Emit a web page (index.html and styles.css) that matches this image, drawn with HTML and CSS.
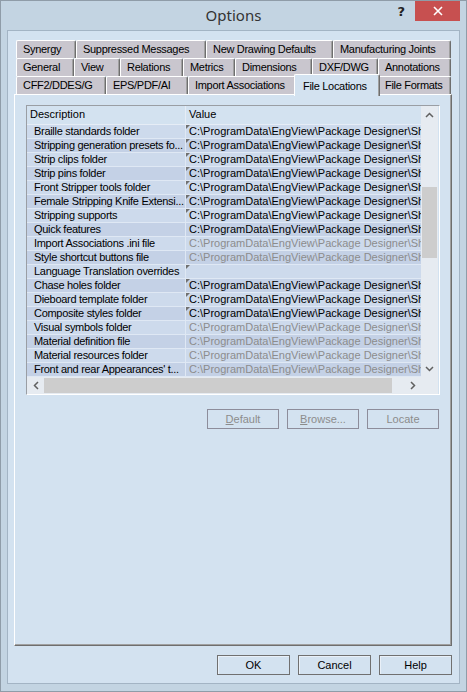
FILE: index.html
```html
<!DOCTYPE html>
<html lang="en">
<head>
  <meta charset="UTF-8" />
  <title>Options</title>
  <link rel="stylesheet" href="styles.css">
</head>
<body>
  <div class="window">
    <div class="titlebar">
      <span></span>
      <span class="title">Options</span>
      <div class="controls">
        <span class="help">?</span>
        <span class="close">
          <svg width="10" height="10" viewBox="0 0 10 10"><path d="M1 1L9 9M9 1L1 9" stroke="#fff" stroke-width="1.6"/></svg>
        </span>
      </div>
    </div>

    <div class="client">
      <div class="tabs">
        <div class="tab-row row-a">
          <span class="tab">Synergy</span>
          <span class="tab">Suppressed Messages</span>
          <span class="tab">New Drawing Defaults</span>
          <span class="tab">Manufacturing Joints</span>
        </div>
        <div class="tab-row row-b">
          <span class="tab">General</span>
          <span class="tab">View</span>
          <span class="tab">Relations</span>
          <span class="tab">Metrics</span>
          <span class="tab">Dimensions</span>
          <span class="tab">DXF/DWG</span>
          <span class="tab">Annotations</span>
        </div>
        <div class="tab-row row-c">
          <span class="tab">CFF2/DDES/G</span>
          <span class="tab">EPS/PDF/AI</span>
          <span class="tab">Import Associations</span>
          <span class="tab active">File Locations</span>
          <span class="tab">File Formats</span>
        </div>
      </div>

      <div class="panel">
        <div class="list">
          <div class="list-main">
            <div class="list-head">
              <span class="col-desc">Description</span>
              <span class="col-val">Value</span>
            </div>
            <div class="row"><span class="col-desc">Braille standards folder</span><span class="col-val mark">C:\ProgramData\EngView\Package Designer\Shared\Braille</span></div>
            <div class="row alt"><span class="col-desc">Stripping generation presets fo...</span><span class="col-val mark">C:\ProgramData\EngView\Package Designer\Shared\Stripping</span></div>
            <div class="row"><span class="col-desc">Strip clips folder</span><span class="col-val mark">C:\ProgramData\EngView\Package Designer\Shared\Clips</span></div>
            <div class="row alt"><span class="col-desc">Strip pins folder</span><span class="col-val mark">C:\ProgramData\EngView\Package Designer\Shared\Pins</span></div>
            <div class="row"><span class="col-desc">Front Stripper tools folder</span><span class="col-val mark">C:\ProgramData\EngView\Package Designer\Shared\Tools</span></div>
            <div class="row alt"><span class="col-desc">Female Stripping Knife Extensi...</span><span class="col-val mark">C:\ProgramData\EngView\Package Designer\Shared\Knives</span></div>
            <div class="row"><span class="col-desc">Stripping supports</span><span class="col-val mark">C:\ProgramData\EngView\Package Designer\Shared\Supports</span></div>
            <div class="row alt"><span class="col-desc">Quick features</span><span class="col-val">C:\ProgramData\EngView\Package Designer\Shared\Features</span></div>
            <div class="row"><span class="col-desc">Import Associations .ini file</span><span class="col-val dim">C:\ProgramData\EngView\Package Designer\Shared\Import.ini</span></div>
            <div class="row alt"><span class="col-desc">Style shortcut buttons file</span><span class="col-val dim">C:\ProgramData\EngView\Package Designer\Shared\Styles.ini</span></div>
            <div class="row"><span class="col-desc">Language Translation overrides</span><span class="col-val mark"></span></div>
            <div class="row alt"><span class="col-desc">Chase holes folder</span><span class="col-val mark">C:\ProgramData\EngView\Package Designer\Shared\Holes</span></div>
            <div class="row"><span class="col-desc">Dieboard template folder</span><span class="col-val mark">C:\ProgramData\EngView\Package Designer\Shared\Dieboard</span></div>
            <div class="row alt"><span class="col-desc">Composite styles folder</span><span class="col-val mark">C:\ProgramData\EngView\Package Designer\Shared\Composite</span></div>
            <div class="row"><span class="col-desc">Visual symbols folder</span><span class="col-val dim">C:\ProgramData\EngView\Package Designer\Shared\Symbols</span></div>
            <div class="row alt"><span class="col-desc">Material definition file</span><span class="col-val dim">C:\ProgramData\EngView\Package Designer\Shared\Materials.xml</span></div>
            <div class="row"><span class="col-desc">Material resources folder</span><span class="col-val dim">C:\ProgramData\EngView\Package Designer\Shared\Materials</span></div>
            <div class="row alt"><span class="col-desc">Front and rear Appearances' t...</span><span class="col-val dim">C:\ProgramData\EngView\Package Designer\Shared\Appearances</span></div>
          </div>

          <div class="vscroll">
            <span class="arrow"><svg width="9" height="6" viewBox="0 0 9 6"><path d="M1 5L4.5 1.5L8 5" fill="none" stroke="#606060" stroke-width="1.5"/></svg></span>
            <div class="vtrack"><span class="vthumb"></span></div>
            <span class="arrow"><svg width="9" height="6" viewBox="0 0 9 6"><path d="M1 1L4.5 4.5L8 1" fill="none" stroke="#606060" stroke-width="1.5"/></svg></span>
          </div>

          <div class="hscroll">
            <span class="arrow"><svg width="6" height="9" viewBox="0 0 6 9"><path d="M5 1L1.5 4.5L5 8" fill="none" stroke="#606060" stroke-width="1.5"/></svg></span>
            <div class="htrack"><span class="hthumb"></span></div>
            <span class="arrow"><svg width="6" height="9" viewBox="0 0 6 9"><path d="M1 1L4.5 4.5L1 8" fill="none" stroke="#606060" stroke-width="1.5"/></svg></span>
          </div>
          <div class="corner"></div>
        </div>

        <div class="panel-buttons">
          <button class="btn" disabled><u>D</u>efault</button>
          <button class="btn" disabled><u>B</u>rowse...</button>
          <button class="btn" disabled>Locate</button>
        </div>
      </div>

      <div class="dialog-buttons">
        <button class="btn">OK</button>
        <button class="btn">Cancel</button>
        <button class="btn">Help</button>
      </div>
    </div>
  </div>
</body>
</html>
```

FILE: styles.css
```css
:root {
  --frame: #c3d4e2;
  --face: #d3e2f0;
  --tab: #c9c6ce;
  --row: #cddaec;
  --row-alt: #c4d1e6;
  --grid-line: #dfe8f4;
  --shadow: #6e6e6e;
  --dim-text: #8c8c8c;
}

body {
  margin: 0;
  font-family: "Liberation Sans", Arial, sans-serif;
  font-size: 11px;
  color: #000;
}

.window {
  width: 467px;
  height: 692px;
  box-sizing: border-box;
  background: var(--frame);
  border: 1px solid #8f9ca8;
  display: flex;
  flex-direction: column;
}

/* title bar */
.titlebar {
  height: 29px;
  display: grid;
  grid-template-columns: 1fr auto 1fr;
}

.title {
  font-family: "Noto Sans", "Open Sans", sans-serif;
  font-size: 15px;
  line-height: 29px;
  color: #333;
}

.controls {
  justify-self: end;
  display: flex;
  align-items: flex-start;
  gap: 10px;
  margin-right: 6px;
}

.help {
  font-family: "DejaVu Sans", sans-serif;
  font-weight: bold;
  font-size: 13px;
  line-height: 22px;
  color: #222;
}

.close {
  width: 45px;
  height: 20px;
  background: #c75050;
  display: flex;
  align-items: center;
  justify-content: center;
}

/* client area */
.client {
  flex: 1;
  margin: 0 6px 7px;
  background: var(--face);
  border: 1px solid #a3b4c4;
  display: flex;
  flex-direction: column;
  padding: 9px 7px 8px 6px;
}

.tabs {
  margin-left: 2px;
}

.tab-row {
  display: grid;
  height: 18px;
}

.row-a { grid-template-columns: 60px 130px 127px 118px; }
.row-b { grid-template-columns: 58px 46px 63px 52px 77px 66px 73px; }
.row-c { grid-template-columns: 90px 82px 108px 82px 73px; }

.tab {
  box-sizing: border-box;
  height: 18px;
  padding: 2px 0 0 6px;
  letter-spacing: -0.3px;
  background: var(--tab);
  border-left: 1px solid #fff;
  border-top: 1px solid #fff;
  border-right: 1px solid var(--shadow);
  box-shadow: inset -1px 0 #a0a0a0;
  border-radius: 2px 2px 0 0;
  white-space: nowrap;
  overflow: hidden;
}

.tab.active {
  background: var(--face);
  height: 22px;
  margin: -2px -2px 0 -2px;
  padding: 5px 0 0 8px;
  position: relative;
  z-index: 1;
}

.panel {
  height: 552px;
  box-sizing: border-box;
  border-left: 1px solid #fff;
  border-top: 1px solid #fff;
  border-right: 1px solid var(--shadow);
  border-bottom: 1px solid var(--shadow);
  box-shadow: inset -1px -1px #a0a0a0;
  padding: 10px 0 0 11px;
}

/* list */
.list {
  width: 414px;
  box-sizing: border-box;
  border: 1px solid #9a9ea4;
  border-right-color: #fff;
  border-bottom-color: #fff;
  display: grid;
  grid-template-columns: 394px 17px;
  grid-template-rows: 271px 17px;
  background: var(--face);
}

.list-main {
  overflow: hidden;
}

.list-head,
.row {
  display: grid;
  grid-template-columns: 159px 235px;
  white-space: nowrap;
}

.list-head {
  height: 19px;
  line-height: 17px;
  box-sizing: border-box;
  border-bottom: 1px solid #e6edf6;
}

.list-head span {
  padding-left: 3px;
}

.list-head .col-desc {
  border-right: 1px solid #e6edf6;
}

.row {
  height: 14px;
  line-height: 13px;
  box-sizing: border-box;
  border-bottom: 1px solid var(--grid-line);
}

.row span {
  background: var(--row);
  overflow: hidden;
}

.row.alt span {
  background: var(--row-alt);
}

.row .col-desc {
  padding-left: 7px;
  letter-spacing: -0.3px;
  border-right: 1px solid var(--grid-line);
}

.row .col-val {
  padding-left: 3px;
  position: relative;
}

.col-val.mark::before {
  content: "";
  position: absolute;
  left: 0;
  top: 0;
  border-top: 4px solid #707070;
  border-right: 4px solid transparent;
}

.col-val.dim {
  color: var(--dim-text);
}

/* scrollbars */
.vscroll {
  display: flex;
  flex-direction: column;
  background: #e6ebf1;
}

.vscroll .arrow {
  height: 17px;
  display: flex;
  align-items: center;
  justify-content: center;
}

.vtrack {
  flex: 1;
  padding-top: 64px;
}

.vthumb {
  display: block;
  height: 71px;
  margin: 0 1px;
  background: #cdcdcd;
}

.hscroll {
  display: flex;
  background: #e6ebf1;
}

.hscroll .arrow {
  width: 17px;
  display: flex;
  align-items: center;
  justify-content: center;
}

.htrack {
  flex: 1;
  display: flex;
  padding-right: 12px;
}

.hthumb {
  flex: 1;
  margin: 1px 0;
  background: #cdcdcd;
}

.corner {
  background: #e6ebf1;
}

/* buttons */
.panel-buttons {
  display: flex;
  gap: 8px;
  width: 413px;
  justify-content: flex-end;
  margin-top: 14px;
}

.btn {
  width: 72px;
  height: 20px;
  padding: 0;
  font-family: "Liberation Sans", Arial, sans-serif;
  font-size: 11px;
  color: #000;
  background: var(--face);
  border: 1px solid #707070;
  box-shadow: inset 1px 1px #e9f0f8;
}

.btn:disabled {
  color: var(--dim-text);
  border-color: #8d8d9b;
  box-shadow: none;
}

.dialog-buttons {
  display: flex;
  justify-content: flex-end;
  gap: 8px;
  margin-top: 9px;
}

.dialog-buttons .btn {
  width: 73px;
}
```
